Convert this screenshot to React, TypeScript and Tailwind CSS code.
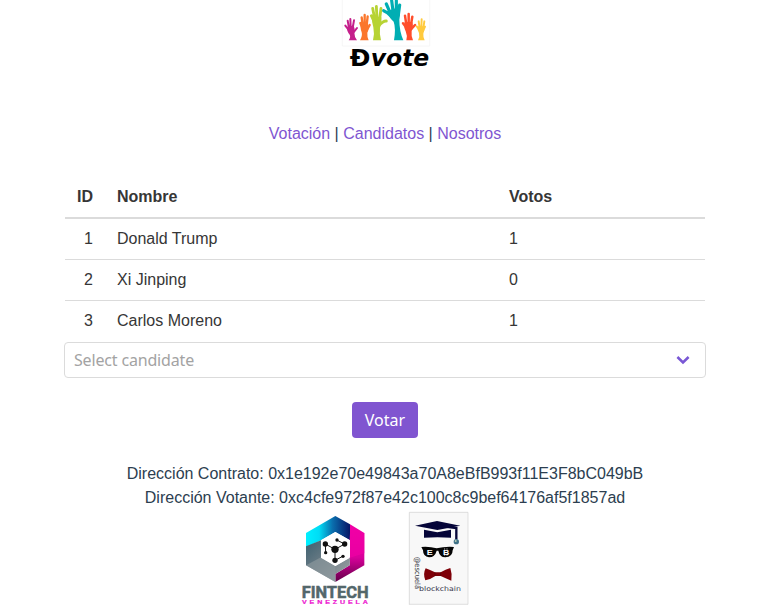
import React from 'react';

type HandProps = { color: string; arm: string; fingers: string; width: number };

const hands: HandProps[] = [
  { color: '#c51f8b', arm: 'M41 121 Q48 111 44 104 Q35 95 36 81 L56 76 Q61 89 58 98 Q58 110 66 121 Z', fingers: 'M41 90 L31 77 M42 84 L38 62 M47 82 L46 57 M53 84 L57 61 M55 98 L66 84', width: 6 },
  { color: '#fb762b', arm: 'M75 121 Q83 107 80 97 Q75 87 78 70 L99 70 Q103 87 97 98 Q96 109 101 121 Z', fingers: 'M82 84 L76 69 M83 76 L80 52 M89 74 L89 45 M95 75 L98 49 M96 90 L104 75', width: 7 },
  { color: '#b7d334', arm: 'M114 121 Q119 100 115 82 Q109 65 113 50 L139 52 Q141 71 135 83 Q133 101 138 121 Z', fingers: 'M117 64 L109 47 M119 56 L113 25 M126 55 L124 19 M134 57 L138 25 M132 76 Q145 62 154 63', width: 8.5 },
  { color: '#00aeb3', arm: 'M177 121 Q183 84 176 65 Q159 51 160 32 L190 22 Q198 40 193 59 Q193 93 205 121 Z', fingers: 'M170 50 Q160 37 146 32 M165 37 L154 12 M174 33 L170 2 M184 31 L184 2 M190 45 L194 15', width: 9.5 },
  { color: '#ff4d2b', arm: 'M214 121 Q218 107 212 94 Q205 81 209 66 L232 66 Q236 82 230 93 Q228 108 234 121 Z', fingers: 'M212 80 L204 70 M214 74 L210 47 M221 72 L221 42 M228 74 L232 50 M229 87 L240 75', width: 7.5 },
  { color: '#ffca3d', arm: 'M249 121 Q255 110 252 99 Q246 91 249 79 L267 79 Q270 93 265 101 Q264 111 269 121 Z', fingers: 'M253 91 L245 79 M254 84 L251 64 M259 83 L260 58 M265 84 L268 64 M264 93 L270 80', width: 5.8 },
];

function VoteLogo() {
  return (
    <svg width="100" height="75" viewBox="0 0 300 225" role="img" aria-label="Ðvote">
      <path d="M22 0V138H284V0" fill="none" stroke="#f1f1f1" strokeWidth="2" />
      {hands.map((h) => (
        <g key={h.color} fill={h.color} stroke={h.color}>
          <path d={h.arm} stroke="none" />
          <path d={h.fingers} fill="none" strokeWidth={h.width} strokeLinecap="round" />
        </g>
      ))}
      <g fontFamily="DejaVu Sans" fontSize="67" fontWeight="700">
        <text x="44" y="197" textLength="62" lengthAdjust="spacingAndGlyphs">Ð</text>
        <text x="107" y="197" textLength="176" lengthAdjust="spacingAndGlyphs" fontStyle="italic">vote</text>
      </g>
    </svg>
  );
}

function FintechLogo() {
  return (
    <svg width="80" height="100" viewBox="0 0 240 300" role="img" aria-label="Fintech Venezuela">
      <defs>
        <linearGradient id="cyan"><stop offset="0" stopColor="#00f0ff" /><stop offset=".3" stopColor="#00dcf5" /><stop offset=".6" stopColor="#0a6fae" /><stop offset="1" stopColor="#071566" /></linearGradient>
        <linearGradient id="magenta" x1="0" y1="0" x2="0" y2="1"><stop offset="0" stopColor="#f000a4" /><stop offset=".5" stopColor="#d9009b" /><stop offset="1" stopColor="#620048" /></linearGradient>
        <linearGradient id="steel" x1="0" y1="0" x2="1" y2="1"><stop offset="0" stopColor="#3d6070" /><stop offset=".5" stopColor="#728088" /><stop offset="1" stopColor="#a3a8aa" /></linearGradient>
      </defs>
      <path d="M33 69 L121 18 L165 43 V68 L165 91 L121 66 L78 91 L33 112Z" fill="url(#cyan)" />
      <path d="M165 68 L208 69 V166 L121 216 V192 L164 166 V91Z" fill="url(#magenta)" />
      <path d="M165 43 L208 69 H165Z" fill="#f000a5" />
      <path d="M165 68 L208 69 V130 L164 143Z" fill="#f000a5" opacity=".7" />
      <path d="M33 109 L78 91 V143 L121 168 L165 143 L164 166 L121 192 V216 L33 166Z" fill="url(#steel)" />
      <path d="M78 142 L33 166 L121 216 V168Z" fill="#8d999e" opacity=".65" />
      <path d="M121 66 L165 91 V142 L121 168 L78 143 V91Z" fill="white" />
      <path d="M91 102 L120 118 L149 102 L127 91 M120 118 L120 151 L143 139 M91 102 L92 128" fill="none" stroke="#151515" strokeWidth="3" />
      <g fill="#111"><circle cx="120" cy="118" r="11" /><circle cx="91" cy="102" r="8" /><circle cx="149" cy="102" r="8" /><circle cx="120" cy="151" r="8" /><circle cx="126" cy="90" r="5" /><circle cx="92" cy="128" r="5" /><circle cx="144" cy="139" r="5" /></g>
      <text x="20" y="263" textLength="201" lengthAdjust="spacingAndGlyphs" fontFamily="Roboto, sans-serif" fontSize="48" fontWeight="700" fill="#53676b" stroke="#53676b" strokeWidth="1.5">FINTECH</text>
      <g transform="translate(21 282) scale(1.25 1)">
        <text textLength="158" fontFamily="Liberation Sans, sans-serif" fontSize="17" fontWeight="700" fill="#ed18d0" stroke="#ed18d0" strokeWidth=".6">VENEZUELA</text>
      </g>
    </svg>
  );
}

function SchoolLogo() {
  return (
    <svg width="80" height="100" viewBox="0 0 240 300" role="img" aria-label="@escuela blockchain">
      <rect x="28" y="13" width="176" height="276" fill="#f8f8f8" />
      <path d="M28 290V13H204" fill="none" stroke="#cfcfcf" strokeWidth="2" />
      <path d="M28 289H204V13" fill="none" stroke="#d2d2d2" strokeWidth="2" />
      <path d="M45 53 L111 39 L181 53 L112 66Z M72 65 L112 73 L153 65 V89 Q112 86 72 89Z" fill="#050538" />
      <path d="M112 53 L169 60 V94" fill="none" stroke="#050538" strokeWidth="7" />
      <circle cx="169" cy="101" r="8" fill="#3f7187" /><circle cx="167" cy="99" r="3" fill="#b7cbb3" />
      <path d="M64 117 Q88 115 110 121 Q135 115 162 117 L158 127 Q158 147 136 148 Q119 147 115 128 H110 Q105 147 87 148 Q69 145 69 127Z" fill="#050505" />
      <g fill="white" fontFamily="Liberation Sans, sans-serif" fontWeight="700" fontSize="22"><text x="80" y="140" textLength="18" lengthAdjust="spacingAndGlyphs">E</text><text x="129" y="140" textLength="19" lengthAdjust="spacingAndGlyphs">B</text></g>
      <path d="M134 121V125 M141 121V125 M134 139V143 M141 139V143" stroke="white" strokeWidth="2" />
      <path d="M77 181 Q93 187 105 193 H122 Q137 184 151 180 Q157 197 154 218 Q137 211 122 204 H106 Q92 214 76 217 Q68 198 77 181Z" fill="#7e0008" />
      <path d="M105 193V204 M122 193V204" stroke="#4d0006" strokeWidth="2" />
      <text transform="translate(46 146) rotate(90)" textLength="97" lengthAdjust="spacingAndGlyphs" fontFamily="DejaVu Sans, sans-serif" fontSize="22" fill="#35353d">@escuela</text>
      <text x="57" y="249" textLength="126" lengthAdjust="spacingAndGlyphs" fontFamily="DejaVu Sans, sans-serif" fontSize="20" fill="#35354b">blockchain</text>
    </svg>
  );
}

const candidates = [
  { id: 1, name: 'Donald Trump', votes: 1 },
  { id: 2, name: 'Xi Jinping', votes: 0 },
  { id: 3, name: 'Carlos Moreno', votes: 1 },
];

export default function App() {
  return (
    <div className="h-[615px] w-full overflow-hidden bg-white font-['Liberation_Sans',Arial,sans-serif] text-base leading-6 text-[#2c3e50]">
      <div className="flex w-[770px] flex-col items-center">
        <header className="flex h-[122px] w-[100px]"><VoteLogo /></header>
        <nav className="h-[55px] whitespace-pre text-center">
          <a href="#votacion" className="text-[#7f56d1]">Votación</a> | <a href="#candidatos" className="text-[#7f56d1]">Candidatos</a> | <a href="#nosotros" className="text-[#7f56d1]">Nosotros</a>
        </nav>
        <table className="mb-px w-[640px] table-fixed border-separate border-spacing-0 text-left text-[#363636]">
          <colgroup><col className="w-10" /><col className="w-[392px]" /><col /></colgroup>
          <thead>
            <tr className="h-[42px]">
              <th className="border-b-2 border-[#dbdbdb] py-2 pr-3 text-right">ID</th>
              <th className="border-b-2 border-[#dbdbdb] px-3 py-2">Nombre</th>
              <th className="border-b-2 border-[#dbdbdb] px-3 py-2">Votos</th>
            </tr>
          </thead>
          <tbody className="[&>tr:not(:last-child)>td]:border-b [&>tr>td]:border-[#dbdbdb]">
            {candidates.map((c) => (
              <tr key={c.id}>
                <td className="py-2 pr-3 text-right">{c.id}</td>
                <td className="px-3 py-2">{c.name}</td>
                <td className="px-3 py-2">{c.votes}</td>
              </tr>
            ))}
          </tbody>
        </table>
        <button className="flex h-9 w-[642px] items-center justify-between rounded border border-[#dbdbdb] pr-[15px] pl-[9px] font-['Noto_Sans',sans-serif] text-[#a3a3a3]">
          <span className="text-base tracking-[-0.17px]">Select candidate</span>
          <svg width="14" height="10" viewBox="0 0 14 10"><path d="M1.4 2 L7 7.5 L12.6 2" fill="none" stroke="#7957d5" strokeWidth="2.5" /></svg>
        </button>
        <button className="mt-6 h-9 w-[66px] rounded bg-[#8055d0] font-['Noto_Sans',sans-serif] text-base text-white">Votar</button>
        <div className="mt-6 text-center">
          <p>Dirección Contrato: 0x1e192e70e49843a70A8eBfB993f11E3F8bC049bB</p>
          <p>Dirección Votante: 0xc4cfe972f87e42c100c8c9bef64176af5f1857ad</p>
        </div>
        <div className="flex w-[180px] gap-[25px]">
          <div className="h-[100px] w-20 shrink-0"><FintechLogo /></div>
          <div className="-mt-0.5 h-[100px] w-20 shrink-0"><SchoolLogo /></div>
        </div>
      </div>
    </div>
  );
}
